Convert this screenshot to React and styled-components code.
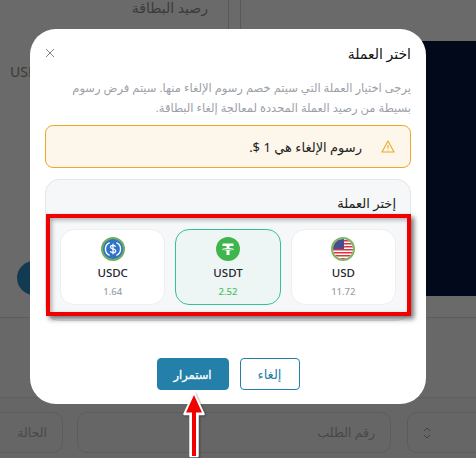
import React from "react";
import styled, { createGlobalStyle } from "styled-components";

const Global = createGlobalStyle`
  html, body { margin: 0; padding: 0; }
  body { width: 476px; height: 458px; overflow: hidden; background: #676867; font-family: "Noto Sans", "DejaVu Sans", sans-serif; }
  * { box-sizing: border-box; }
`;

const Page = styled.div`
  position: relative;
  width: 476px;
  height: 458px;
  overflow: hidden;
  background: #696a69;
`;

/* dimmed page behind the dialog */
const Backdrop = styled.div`
  position: absolute;
  inset: 0;
  display: grid;
  grid-template-rows: 318px 80px 1fr;
`;

const TopArea = styled.div`
  position: relative;
  border-bottom: 1px solid #5b5c5b;
`;

const MiddleBand = styled.div`
  border-bottom: 1px solid #5e5f5e;
  background: #676867;
`;

const BalanceLabel = styled.div`
  position: absolute;
  top: 0;
  left: 125px;
  width: 83px;
  text-align: right;
  white-space: nowrap;
  direction: rtl;
  font-size: 14px;
  line-height: 16px;
  color: #3a3b3b;
`;

const Divider = styled.div`
  position: absolute;
  top: 0;
  left: ${(p) => p.$left}px;
  width: 1px;
  height: 30px;
  background: #585958;
`;

const DarkPanel = styled.div`
  position: absolute;
  left: 400px;
  top: 41px;
  width: 76px;
  height: 255px;
  background: #01091a;
`;

const UsdText = styled.div`
  position: absolute;
  left: 10px;
  top: 62px;
  font-size: 14px;
  color: #3a3b3b;
`;

const Blob = styled.div`
  position: absolute;
  left: 17px;
  top: 261px;
  width: 34px;
  height: 34px;
  border-radius: 50%;
  background: #123a52;
`;

const FilterRow = styled.div`
  display: flex;
  gap: 14px;
  padding-top: 14px;
  margin-left: -20px;
  background: #656665;
`;

const FilterBox = styled.div`
  width: ${(p) => p.$w}px;
  height: 41px;
  flex: none;
  margin-left: ${(p) => p.$ml || 0}px;
  border: 1px solid #5b5c5b;
  border-radius: 10px;
  display: flex;
  align-items: center;
  justify-content: ${(p) => p.$justify || "flex-end"};
  padding: 0 15px;
  font-size: 12.5px;
  color: #484949;
`;

const Dialog = styled.div`
  position: absolute;
  left: 30px;
  top: 29px;
  width: 396px;
  height: 375px;
  background: #fff;
  border-radius: 26px;
  padding: 15px 15px 0;
  direction: rtl;
  display: flex;
  flex-direction: column;
`;

const Header = styled.div`
  display: flex;
  align-items: center;
  justify-content: space-between;
  height: 18px;
`;

const Title = styled.h2`
  margin: 0;
  font-size: 14px;
  font-weight: 400;
  color: #111;
`;

const Close = styled.span`
  display: flex;
  color: #7f858d;
`;

const Description = styled.p`
  margin: 16px 0 0;
  font-size: 11.5px;
  line-height: 20px;
  color: #9ca1a8;
`;

const Notice = styled.div`
  margin-top: 7px;
  height: 43px;
  border: 1px solid #f0a724;
  border-radius: 8px;
  background: #fdf6ea;
  display: flex;
  align-items: center;
  gap: 19px;
  padding: 0 15px;
  font-size: 13px;
  color: #222;
`;

const Picker = styled.div`
  margin-top: 11px;
  height: 142px;
  border: 1px solid #e3e6ea;
  border-radius: 14px;
  background: #f6f7f9;
  padding: 15px 14px 0;
`;

const PickerLabel = styled.div`
  font-size: 13px;
  line-height: 16px;
  color: #222;
`;

const Cards = styled.div`
  display: grid;
  grid-template-columns: repeat(3, 1fr);
  gap: 10px;
  margin-top: 18px;
`;

const Card = styled.div`
  height: 76px;
  border-radius: 14px;
  background: ${(p) => (p.$active ? "#eef6f5" : "#fff")};
  border: 1px solid ${(p) => (p.$active ? "#35c28f" : "#eceef1")};
  display: flex;
  flex-direction: column;
  align-items: center;
  padding-top: 7px;
  direction: ltr;
`;

const CoinIcon = styled.svg`
  width: 24px;
  height: 24px;
  display: block;
`;

const CardName = styled.div`
  margin-top: 4px;
  font-size: 11.5px;
  line-height: 15px;
  font-weight: 500;
  color: #23272e;
`;

const CardAmount = styled.div`
  margin-top: 5px;
  font-size: 9.5px;
  line-height: 13px;
  font-weight: 500;
  color: ${(p) => (p.$active ? "#4cc05f" : "#9ca1a8")};
`;

const Highlight = styled.div`
  position: absolute;
  left: 46px;
  top: 214px;
  width: 365px;
  height: 102px;
  border: 4px solid #f00000;
  box-shadow: 3px 3px 5px rgba(0, 0, 0, 0.55), inset 2px 2px 4px rgba(0, 0, 0, 0.3);
  pointer-events: none;
`;

const Actions = styled.div`
  margin-top: 37px;
  display: flex;
  justify-content: center;
  gap: 11px;
`;

const Button = styled.button`
  width: ${(p) => (p.$primary ? 72 : 60)}px;
  height: 32px;
  border-radius: 4px;
  border: 1px solid #2480a8;
  background: ${(p) => (p.$primary ? "#2480a8" : "#fff")};
  color: ${(p) => (p.$primary ? "#fff" : "#2480a8")};
  font-family: inherit;
  font-size: ${(p) => (p.$primary ? 11.5 : 13)}px;
  font-weight: 400;
  -webkit-text-stroke: ${(p) => (p.$primary ? "0.3px #fff" : "0")};
  padding: 0;
`;

const Arrow = styled.svg`
  position: absolute;
  left: 180px;
  top: 388px;
  width: 28px;
  height: 70px;
  filter: drop-shadow(1px 1px 1px rgba(0, 0, 0, 0.35));
`;

const UsFlag = () => (
  <CoinIcon viewBox="0 0 24 24">
    <defs>
      <clipPath id="flagClip"><circle cx="12" cy="12" r="10" /></clipPath>
    </defs>
    <circle cx="12" cy="12" r="12" fill="#7cb964" />
    <g clipPath="url(#flagClip)">
      <rect x="2" y="2" width="20" height="20" fill="#fff" />
      {[3, 6, 9, 12, 15, 18, 21].map((y) => (
        <rect key={y} x="2" y={y} width="20" height="1.5" fill="#d9363e" />
      ))}
      <rect x="2" y="2" width="11" height="10" fill="#474f8f" />
    </g>
  </CoinIcon>
);

const TetherIcon = () => (
  <CoinIcon viewBox="0 0 24 24">
    <circle cx="12" cy="12" r="12" fill="#3fb54e" />
    <path d="M6.5 6.5h11v2.6h-4v2c2.3.1 4.3.6 4.3 1.2s-2 1.1-4.3 1.2V18h-3v-4.5c-2.3-.1-4.3-.6-4.3-1.2s2-1.1 4.3-1.2v-2h-4z" fill="#fff" />
    <path d="M7.4 12.2c1.2.5 8 .5 9.2 0" stroke="#3fb54e" strokeWidth=".7" fill="none" />
  </CoinIcon>
);

const UsdcIcon = () => (
  <CoinIcon viewBox="0 0 24 24">
    <circle cx="12" cy="12" r="12" fill="#6fae5f" />
    <circle cx="12" cy="12" r="10" fill="#2f74c8" />
    <path d="M8.6 5.6a7 7 0 0 0 0 12.8M15.4 5.6a7 7 0 0 1 0 12.8" stroke="#fff" strokeWidth="1.4" fill="none" />
    <path d="M14.6 9.8c-.3-1-1.3-1.5-2.6-1.5-1.5 0-2.6.7-2.6 1.8 0 2.5 5.3 1.2 5.3 3.8 0 1.1-1.1 1.8-2.7 1.8-1.4 0-2.4-.6-2.7-1.6M12 6.8v10.4" stroke="#fff" strokeWidth="1.3" fill="none" />
  </CoinIcon>
);

const currencies = [
  { name: "USD", amount: "11.72", Icon: UsFlag },
  { name: "USDT", amount: "2.52", Icon: TetherIcon, active: true },
  { name: "USDC", amount: "1.64", Icon: UsdcIcon },
];

export default function App() {
  return (
    <Page>
      <Global />
      <Backdrop>
        <TopArea>
          <BalanceLabel>رصيد البطاقة</BalanceLabel>
          <Divider $left={228} />
          <Divider $left={240} />
          <DarkPanel />
          <UsdText>USD</UsdText>
          <Blob />
        </TopArea>
        <MiddleBand />
        <FilterRow>
          <FilterBox $w={83}>الحالة</FilterBox>
          <FilterBox $w={314}>رقم الطلب</FilterBox>
          <FilterBox $w={80} $ml={2} $justify="flex-start">
            <svg width="8" height="12" viewBox="0 0 8 12" fill="none" stroke="#3f4040" strokeWidth="1">
              <path d="M1 4l3-3 3 3M1 8l3 3 3-3" />
            </svg>
          </FilterBox>
        </FilterRow>
      </Backdrop>

      <Dialog>
        <Header>
          <Title>اختر العملة</Title>
          <Close>
            <svg width="10" height="10" viewBox="0 0 10 10" stroke="currentColor" strokeWidth="1" fill="none">
              <path d="M1 1l8 8M9 1l-8 8" />
            </svg>
          </Close>
        </Header>
        <Description>
          يرجى اختيار العملة التي سيتم خصم رسوم الإلغاء منها. سيتم فرض رسوم بسيطة من رصيد العملة المحددة لمعالجة إلغاء البطاقة.
        </Description>
        <Notice>
          <svg width="14" height="13" viewBox="0 0 14 13" fill="none" stroke="#f0a724" strokeWidth="1.1" strokeLinejoin="round">
            <path d="M7 1L13 12H1z" />
            <path d="M7 5v3.5M7 9.8v.6" />
          </svg>
          <span>رسوم الإلغاء هي 1 $.</span>
        </Notice>
        <Picker>
          <PickerLabel>إختر العملة</PickerLabel>
          <Cards>
            {currencies.map(({ name, amount, Icon, active }) => (
              <Card key={name} $active={active}>
                <Icon />
                <CardName>{name}</CardName>
                <CardAmount $active={active}>{amount}</CardAmount>
              </Card>
            ))}
          </Cards>
        </Picker>
        <Actions>
          <Button>إلغاء</Button>
          <Button $primary>استمرار</Button>
        </Actions>
      </Dialog>

      <Highlight />

      <Arrow viewBox="0 0 28 70">
        <path d="M14 5.5L23.5 26H17.5V68H10.5V26H4.5z" fill="#fff" stroke="#fff" strokeWidth="2.5" strokeLinejoin="round" />
        <path d="M14 7L22 24.5H16V68H12V24.5H6z" fill="#f00000" />
      </Arrow>
    </Page>
  );
}
